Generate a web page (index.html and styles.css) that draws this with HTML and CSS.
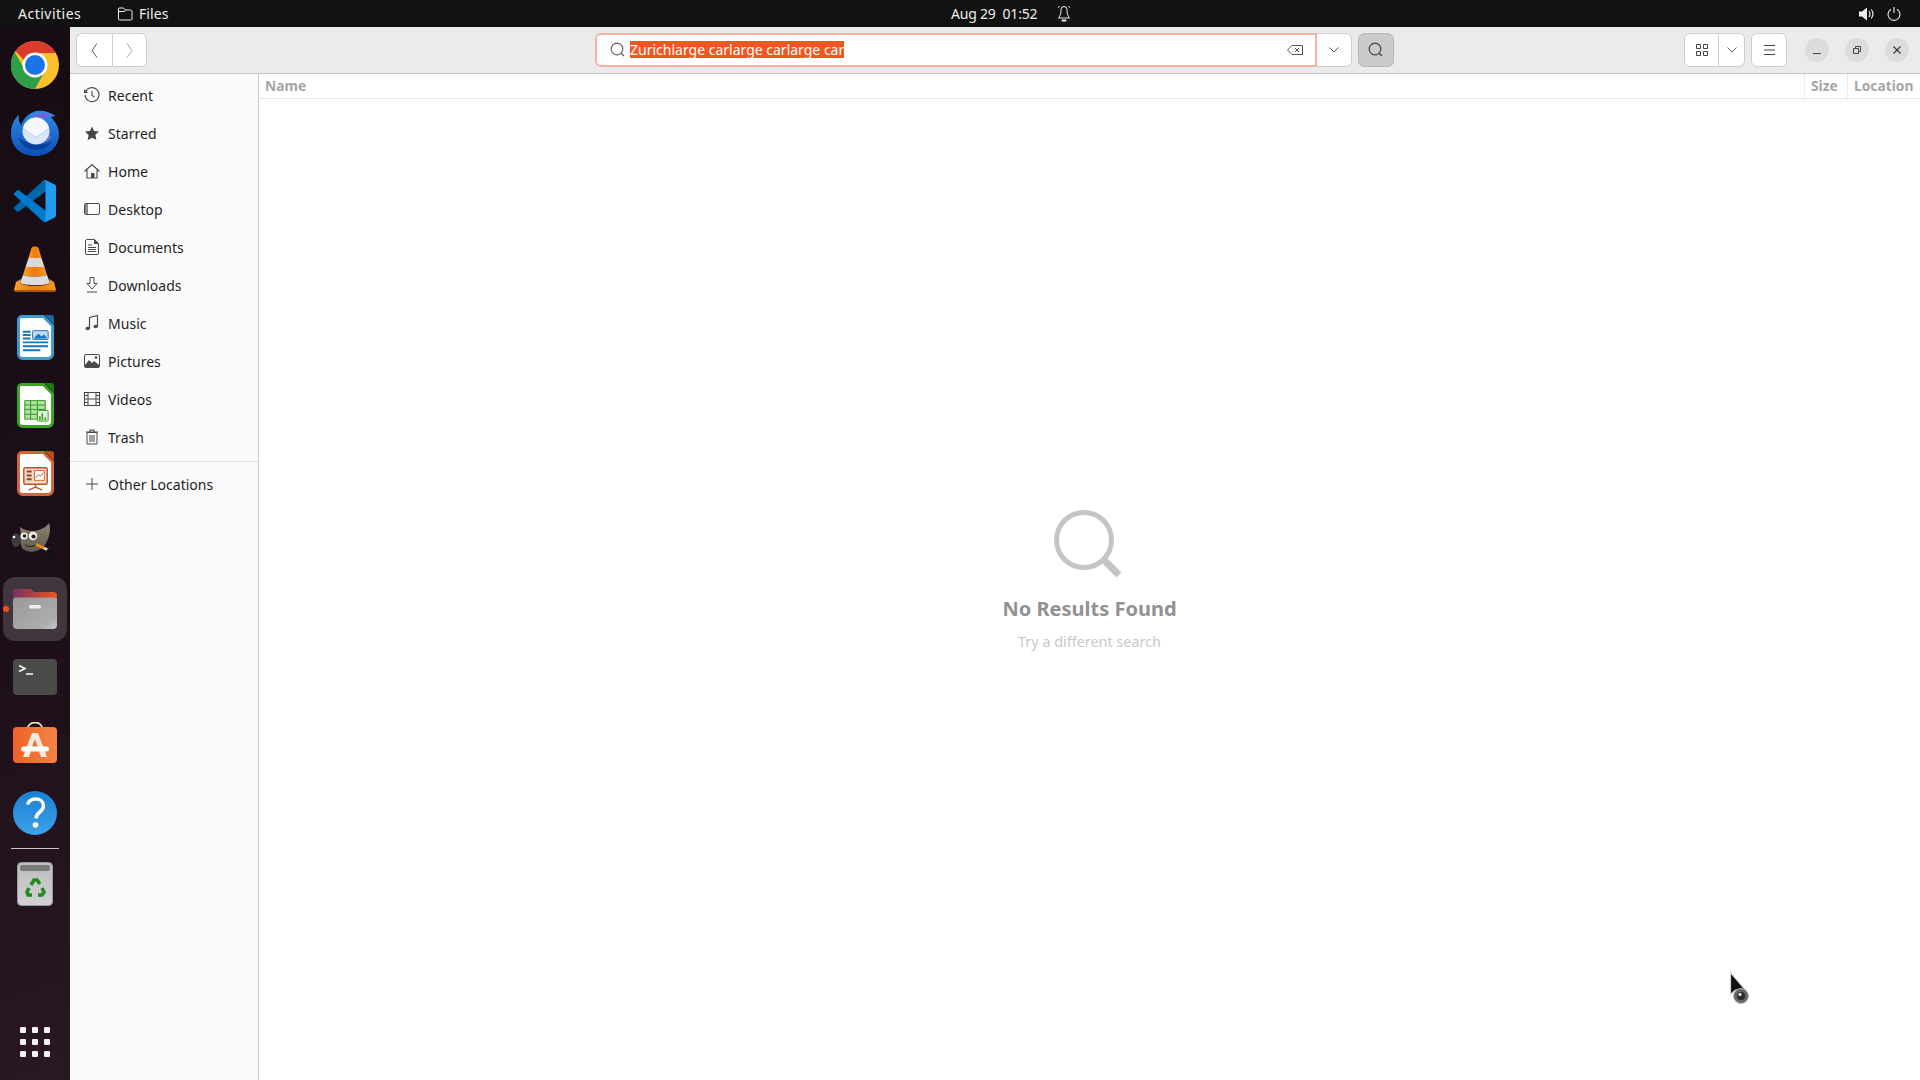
FILE: index.html
```html
<!DOCTYPE html>
<html lang="en">
<head>
<meta charset="utf-8">
<title>Files</title>
<link rel="stylesheet" href="styles.css">
</head>
<body>
<header class="topbar">
  <span class="tb-activities">Activities</span>
  <svg class="tb-folder" width="16" height="14" viewBox="0 0 16 14"><path d="M1.500 12V2a1 1 0 0 1 1-1h4l2 2h5a1.500 1.500 0 0 1 1.500 1.500V12a1.200 1.200 0 0 1-1.200 1H2.700a1.200 1.200 0 0 1-1.200-1zM1.500 4.500h6l1-1.500" fill="none" stroke="#eee" stroke-width="1"/></svg>
  <span class="tb-files">Files</span>
  <span class="tb-clock">Aug 29&nbsp; 01:52</span>
  <svg class="tb-bell" width="14" height="16" viewBox="0 0 14 16"><path d="M4 3.500a3 3 0 0 1 6 0c0 4 .5 6 2.500 8.500h-11C3.500 9.500 4 7.500 4 3.500zM1 1.500 2.500.5M13 1.500 11.500.5" fill="none" stroke="#eee" stroke-width="1"/><rect x="4.500" y="13.500" width="5" height="2" rx="1" fill="#eee"/></svg>
  <svg class="tb-vol" width="15" height="14" viewBox="0 0 15 14"><path d="M0 4.500h3L8 .5v13l-5-4H0z" fill="#eee"/><path d="M10 4c1.200 1.800 1.200 4.200 0 6M12.300 2.500c2 2.800 2 6.200 0 9" fill="none" stroke="#eee" stroke-width="1.200"/></svg>
  <svg class="tb-power" width="14" height="14" viewBox="0 0 14 14"><path d="M4 2.200a6 6 0 1 0 6 0M7 0v6" fill="none" stroke="#eee" stroke-width="1.100"/></svg>
</header>

<div class="desktop">
  <nav class="dock">
    <div class="dock-cell">
      <svg width="48" height="48" viewBox="0 0 48 48"><circle cx="24" cy="24" r="24" fill="#fbc02d"/><path d="M24 0A24 24 0 0 1 45 12H24a12 12 0 0 0-11 7L4.500 10A24 24 0 0 1 24 0z" fill="#db3b2e"/><path d="M3.600 11A24 24 0 0 0 24 48l10-18a12 12 0 0 1-20-1z" fill="#2f9e49"/><circle cx="24" cy="24" r="12.500" fill="#fff"/><circle cx="24" cy="24" r="10" fill="#1a73e8"/></svg>
    </div>
    <div class="dock-cell">
      <svg width="48" height="46" viewBox="0 0 48 46"><defs><linearGradient id="tb" x1="0" y1="0" x2="0" y2="1"><stop offset="0" stop-color="#2f8be8"/><stop offset="1" stop-color="#0d4fb5"/></linearGradient></defs><path d="M8 5c-1 4 0 7 2 10 3-7 9-13 16-14 7-1 12 1 19 5-2 0-4 .5-5 1.500C45 12 48 18 48 24c0 13-10 22-24 22S0 37 0 24C0 15 3 9 8 5z" fill="url(#tb)"/><path d="M20 8c5-6 15-6 22-3-4 0-7 1-8 4-5-1-10-2-14-1z" fill="#6f66dc"/><path d="M7 27c3 9 10 13 18 13 7 0 12-3 16-9-5 3-10 4-17 3-7-1-13-3-17-7z" fill="#0b3f9c"/><path d="M24 34c7 0 12-2 16-6-1-3-3-4-5-5L24 34z" fill="#7f78e0" opacity=".7"/><circle cx="25" cy="21" r="13.500" fill="#d8e8f8"/><path d="M12 18.500 25 27.500 38 18.500A13.500 13.500 0 0 0 25 7.500 13.500 13.500 0 0 0 12 18.500z" fill="#f5f9fd"/><path d="M12 18.500 25 27.500 38 18.500" fill="none" stroke="#b4cfee" stroke-width="1"/></svg>
    </div>
    <div class="dock-cell">
      <svg width="42" height="42" viewBox="0 0 100 100"><path d="M96.4614 10.7962L75.8569 0.875542C73.4719 -0.272773 70.6217 0.211611 68.75 2.08333L1.29858 63.5832C-0.515693 65.2373 -0.513607 68.0937 1.30308 69.7452L6.81272 74.754C8.29793 76.1042 10.5347 76.2036 12.1338 74.9905L93.3609 13.3699C96.086 11.3026 100 13.2462 100 16.6667V16.4275C100 14.0265 98.6246 11.8378 96.4614 10.7962Z" fill="#0065a9"/><path d="M96.4614 89.2038L75.8569 99.1245C73.4719 100.273 70.6217 99.7884 68.75 97.9167L1.29858 36.4169C-0.515693 34.7627 -0.513607 31.9063 1.30308 30.2548L6.81272 25.246C8.29793 23.8958 10.5347 23.7964 12.1338 25.0095L93.3609 86.6301C96.086 88.6974 100 86.7538 100 83.3334V83.5726C100 85.9735 98.6246 88.1622 96.4614 89.2038Z" fill="#007acc"/><path d="M75.8578 99.1263C73.4721 100.274 70.6219 99.7885 68.75 97.9166C71.0564 100.223 75 98.5895 75 95.3278V4.67213C75 1.41039 71.0564 -0.223106 68.75 2.08329C70.6219 0.211402 73.4721 -0.273666 75.8578 0.873633L96.4587 10.7807C98.6234 11.8217 100 14.0112 100 16.4132V83.5871C100 85.9891 98.6234 88.1786 96.4586 89.2196L75.8578 99.1263Z" fill="#1f9cf0"/></svg>
    </div>
    <div class="dock-cell">
      <svg width="42" height="46" viewBox="0 0 42 46"><defs><linearGradient id="vlc" x1="0" x2="1"><stop offset="0" stop-color="#f7a030"/><stop offset=".5" stop-color="#ee7a08"/><stop offset="1" stop-color="#f29a28"/></linearGradient></defs><path d="M17.500 2c1-2 6-2 7 0l3 10H14.500z" fill="url(#vlc)"/><path d="M14.500 12h13l3 9h-19z" fill="#d9d9d9"/><path d="M11.500 21h19l2.500 8c-5 2-19 2-24 0z" fill="url(#vlc)"/><path d="M9 29c5 2 19 2 24 0l3 8c-6 3-24 3-30 0z" fill="#dcdcdc"/><path d="M7 33 2 36 0 44h42l-2-8-5-3 1 4c-6 4-24 4-30 0z" fill="url(#vlc)"/><path d="M0 44h42l-1 2H1z" fill="#a8560a"/></svg>
    </div>
    <div class="dock-cell">
      <svg width="37" height="45" viewBox="0 0 38 46"><path d="M5 1.500h22L36.500 11v29A4.500 4.500 0 0 1 32 44.500H6A4.500 4.500 0 0 1 1.500 40V5A3.500 3.500 0 0 1 5 1.500z" fill="#fff" stroke="#3d9bcb" stroke-width="3"/><path d="M28 0l10 10V3a3 3 0 0 0-3-3z" fill="#1c6a9c"/><path d="M6 17h8M6 20.500h8M6 24h8M6 28h26M6 32h26M6 36h18" stroke="#1a77b3" stroke-width="2"/><rect x="16" y="16" width="16" height="9" rx="1" fill="#bfdcf0" stroke="#1a77b3"/><path d="M17 24l5-5 3 3 3-2 3 4z" fill="#1a77b3"/></svg>
    </div>
    <div class="dock-cell">
      <svg width="37" height="45" viewBox="0 0 38 46"><path d="M5 1.500h22L36.500 11v29A4.500 4.500 0 0 1 32 44.500H6A4.500 4.500 0 0 1 1.500 40V5A3.500 3.500 0 0 1 5 1.500z" fill="#fff" stroke="#3aa520" stroke-width="3"/><path d="M28 0l10 10V3a3 3 0 0 0-3-3z" fill="#1f7a12"/><path d="M8 18h21v19H8z" fill="#b5e0a8" stroke="#2f9a18"/><path d="M8 22.500h21M8 27h21M8 32h21M14 18v19M21 18v19" stroke="#2f9a18" fill="none"/><rect x="21" y="28" width="11" height="11" rx="1" fill="#dff2d8" stroke="#2f9a18"/><path d="M23.500 38v-4M26 38v-7M29 38v-3" stroke="#2f9a18" stroke-width="1.500"/></svg>
    </div>
    <div class="dock-cell">
      <svg width="37" height="45" viewBox="0 0 38 46"><path d="M5 1.500h22L36.500 11v29A4.500 4.500 0 0 1 32 44.500H6A4.500 4.500 0 0 1 1.500 40V5A3.500 3.500 0 0 1 5 1.500z" fill="#fff" stroke="#d2653a" stroke-width="3"/><path d="M28 0l10 10V3a3 3 0 0 0-3-3z" fill="#b84e14"/><rect x="7" y="17" width="24" height="17" rx="1.500" fill="#f3d9c6" stroke="#b7562a" stroke-width="1.500"/><path d="M10 21h5M10 25h5M10 29h5" stroke="#8a4424" stroke-width="2"/><rect x="18" y="20" width="10" height="10" fill="#fff" stroke="#c66a3c"/><path d="M19 28l3-4 2 2 3-4" fill="none" stroke="#c66a3c"/><path d="M19 34v3l-7 3M19 37l7 3" stroke="#b7562a" stroke-width="1.500" fill="none"/></svg>
    </div>
    <div class="dock-cell">
      <svg width="48" height="40" viewBox="0 0 48 40"><defs><linearGradient id="gimp" x1="0" y1="0" x2="0" y2="1"><stop offset="0" stop-color="#8d8572"/><stop offset="1" stop-color="#5f5a4c"/></linearGradient></defs><path d="M9 6C14 10 22 11 28 9 33 7 36 5 38 2 40 8 39 16 34 24 29 31 18 33 12 28 9 25 9 18 10 14z" fill="url(#gimp)"/><ellipse cx="5" cy="19" rx="4.500" ry="7" fill="#3c3c3c"/><circle cx="3" cy="16" r="1.300" fill="#fff"/><circle cx="13" cy="15" r="3.600" fill="#eee"/><circle cx="13.500" cy="15" r="1.800" fill="#222"/><circle cx="22" cy="15" r="4.200" fill="#eee"/><circle cx="22.500" cy="15.500" r="2.100" fill="#222"/><path d="M14 24c3 2 7 2 11 0" fill="none" stroke="#222" stroke-width="1"/><path d="M25 23.500l9 4" stroke="#ee8a1a" stroke-width="3"/><path d="M33 27l5 2.500" stroke="#ccc" stroke-width="3"/><path d="M37 27.500c4 1 8 5 10 12-6-2-10-5-12-9z" fill="#111"/></svg>
    </div>
    <div class="dock-cell">
      <div class="dock-active"></div>
      <div class="dock-dot"></div>
      <svg class="dock-over" width="44" height="40" viewBox="0 0 44 40"><path d="M3 0h15l3 3h19a4 4 0 0 1 4 4v10H0V3a3 3 0 0 1 3-3z" fill="url(#fback)"/><path d="M3 8.500h38a3 3 0 0 1 3 3V36a4 4 0 0 1-4 4H4a4 4 0 0 1-4-4V11.500a3 3 0 0 1 3-3z" fill="url(#ffront)"/><rect x="16" y="16" width="12" height="3.500" rx="1.500" fill="#eee"/><defs><linearGradient id="fback" x1="0" x2="1"><stop offset="0" stop-color="#7e2f67"/><stop offset="1" stop-color="#e8561f"/></linearGradient><linearGradient id="ffront" x1="0" y1="0" x2="1" y2="1"><stop offset="0" stop-color="#999"/><stop offset=".8" stop-color="#adadad"/><stop offset="1" stop-color="#c8c8c8"/></linearGradient></defs></svg>
    </div>
    <div class="dock-cell">
      <svg width="44" height="36" viewBox="0 0 44 36"><rect width="44" height="36" rx="4" fill="#4a4a48"/><path d="M6 6.500l6 3-6 3" fill="none" stroke="#fff" stroke-width="1.500"/><path d="M13 15h7" stroke="#fff" stroke-width="1.500"/></svg>
    </div>
    <div class="dock-cell">
      <svg class="nudge-up" width="44" height="42" viewBox="0 0 44 42"><defs><linearGradient id="shop" x1="0" x2="1"><stop offset="0" stop-color="#f0622a"/><stop offset="1" stop-color="#f38343"/></linearGradient></defs><path d="M15 6a7 5.500 0 0 1 14 0" fill="none" stroke="#f3d9b8" stroke-width="1.800"/><rect y="5" width="44" height="36" rx="4" fill="url(#shop)"/><path fill-rule="evenodd" d="M19 11h6l9 24h-6l-2-6h-8l-2 6h-6zM22 17l-3 8h6z" fill="#fbe8de"/><rect x="8" y="24.500" width="28" height="5" rx="2.500" fill="#fff"/></svg>
    </div>
    <div class="dock-cell">
      <svg width="44" height="44" viewBox="0 0 44 44"><circle cx="22" cy="22" r="22" fill="url(#help)"/><path d="M14.500 13.500C16 9.500 19 8 22.500 8c4.500 0 8 2.700 8 6.800 0 3-1.800 4.700-4 6.500-2 1.600-3.300 3-3.500 6" fill="none" stroke="#fff" stroke-width="3.500"/><circle cx="22.500" cy="34" r="2.800" fill="#fff"/><defs><linearGradient id="help" x1="0" y1="0" x2="0" y2="1"><stop offset="0" stop-color="#1b7fd3"/><stop offset="1" stop-color="#3da2ea"/></linearGradient></defs></svg>
    </div>
    <div class="dock-sep"></div>
    <div class="dock-trash">
      <svg width="36" height="44" viewBox="0 0 36 44"><defs><linearGradient id="bin" x1="0" y1="0" x2="0" y2="1"><stop offset="0" stop-color="#bcbcbc"/><stop offset="1" stop-color="#d2d2d2"/></linearGradient></defs><rect x=".5" y=".5" width="35" height="43" rx="4" fill="url(#bin)" stroke="#9a9a9a"/><rect x="3" y="3" width="30" height="6" rx="2" fill="#7a7a7a"/><g fill="none" stroke="#218a21" stroke-width="3.500"><path d="M14 23l3-5h3l3 4"/><path d="M25 26l2 4-2 3h-4"/><path d="M15 33h-4l-1-3 2-4"/></g></svg>
    </div>
    <div class="dock-grid">
      <i></i><i></i><i></i><i></i><i></i><i></i><i></i><i></i><i></i>
    </div>
  </nav>

  <div class="window">
    <div class="toolbar">
      <div class="btn-group nav-group">
        <button class="tbtn nav-btn"><svg width="7" height="15" viewBox="0 0 7 15"><path d="M6 .5 1 7.500l5 7" fill="none" stroke="#555" stroke-width="1"/></svg></button>
        <button class="tbtn nav-btn"><svg width="7" height="15" viewBox="0 0 7 15"><path d="M1 .5 6 7.500l-5 7" fill="none" stroke="#a5a5a5" stroke-width="1"/></svg></button>
      </div>
      <div class="search-group">
        <div class="search-entry">
          <svg class="search-lead" width="16" height="16" viewBox="0 0 16 16"><circle cx="7" cy="7" r="5.800" fill="none" stroke="#666" stroke-width="1.200"/><path d="M11.200 11.200 14 14" stroke="#666" stroke-width="1.500"/></svg>
          <span class="search-text">Zurichlarge carlarge carlarge car</span>
          <svg class="search-clear" width="16" height="10" viewBox="0 0 16 10"><path d="M5 .5h10.500v9H5L.5 5z" fill="none" stroke="#555"/><path d="M8 3l4 4M12 3 8 7" stroke="#555"/></svg>
        </div>
        <button class="search-drop"><svg width="10" height="6" viewBox="0 0 10 6"><path d="M.5.500 5 5 9.500.5" fill="none" stroke="#555" stroke-width="1"/></svg></button>
      </div>
      <button class="search-toggle"><svg width="16" height="16" viewBox="0 0 16 16"><circle cx="7" cy="7" r="5.800" fill="none" stroke="#444" stroke-width="1.200"/><path d="M11.200 11.200 14 14" stroke="#444" stroke-width="1.500"/></svg></button>
      <div class="btn-group view-group">
        <button class="tbtn view-btn"><svg width="12" height="12" viewBox="0 0 12 12"><path d="M.5.500h4v4h-4zM7.500.500h4v4h-4zM.5 7.500h4v4h-4zM7.500 7.500h4v4h-4z" fill="none" stroke="#444"/></svg></button>
        <button class="tbtn view-drop"><svg width="10" height="6" viewBox="0 0 10 6"><path d="M.5.500 5 5 9.500.5" fill="none" stroke="#666" stroke-width="1"/></svg></button>
      </div>
      <button class="tbtn menu-btn"><svg width="11" height="10" viewBox="0 0 11 10"><path d="M0 .5h11M0 5h11M0 9.500h11" stroke="#444"/></svg></button>
      <div class="wm-buttons">
        <span class="wm"><svg width="8" height="8" viewBox="0 0 8 8"><path d="M0 7.500h8" stroke="#444"/></svg></span>
        <span class="wm"><svg width="8" height="8" viewBox="0 0 8 8"><path d="M.5 2.500h5v5h-5zM2.500 2V.5h5v5H6" fill="none" stroke="#444"/></svg></span>
        <span class="wm"><svg width="8" height="8" viewBox="0 0 8 8"><path d="M.5.500l7 7M7.500.5l-7 7" stroke="#333" stroke-width="1.100"/></svg></span>
      </div>
    </div>

    <div class="content">
      <aside class="sidebar">
        <div class="side-row"><svg width="16" height="16" viewBox="0 0 16 16"><path d="M1.500 5A7 7 0 1 1 1 8" fill="none" stroke="#4a4a4a" stroke-width="1.100"/><path d="M0 2v4h4z" fill="#4a4a4a"/><path d="M8 4v4.500l2.500 1.500" fill="none" stroke="#4a4a4a" stroke-width="1.100"/></svg><span>Recent</span></div>
        <div class="side-row"><svg width="16" height="16" viewBox="0 0 16 16"><path d="M8 1.500l2 4.500 5 .5-3.700 3.300 1.100 5L8 12.700 3.600 15.300l1.100-5L1 6.500 6 6z" fill="#444"/></svg><span>Starred</span></div>
        <div class="side-row"><svg width="16" height="16" viewBox="0 0 16 16"><path d="M.5 8.500 8 1.500l7.500 7M3 7v8h10V7" fill="none" stroke="#4a4a4a" stroke-width="1.100"/><rect x="7" y="10" width="3.500" height="5" fill="#4a4a4a"/></svg><span>Home</span></div>
        <div class="side-row"><svg width="16" height="14" viewBox="0 0 16 14"><rect x=".5" y="1.500" width="15" height="11" rx="1.500" fill="#fafafa" stroke="#4a4a4a"/><rect x="1" y="2" width="3" height="10" fill="#8a8a8a"/></svg><span>Desktop</span></div>
        <div class="side-row"><svg width="14" height="16" viewBox="0 0 14 16"><path d="M1.500.5h8l4 4V14a1.500 1.500 0 0 1-1.500 1.500H2A1.500 1.500 0 0 1 .5 14V2A1.500 1.500 0 0 1 1.500.5z" fill="none" stroke="#4a4a4a"/><path d="M9 .5l5 4.500H9z" fill="#4a4a4a"/><path d="M3 6h4M3 8.500h8M3 10.500h8M3 12.500h8" stroke="#4a4a4a"/></svg><span>Documents</span></div>
        <div class="side-row"><svg width="14" height="16" viewBox="0 0 14 16"><path d="M5 .5h4v6h3L7 12 2 6.500h3z" fill="none" stroke="#4a4a4a"/><path d="M2 15h10" stroke="#4a4a4a"/></svg><span>Downloads</span></div>
        <div class="side-row"><svg width="14" height="16" viewBox="0 0 14 16"><path d="M4.500 13V2.500l8-2V11" fill="none" stroke="#4a4a4a" stroke-width="1.200"/><ellipse cx="2.700" cy="13.500" rx="2.200" ry="1.800" fill="#4a4a4a"/><ellipse cx="10.700" cy="11.500" rx="2.200" ry="1.800" fill="#4a4a4a"/></svg><span>Music</span></div>
        <div class="side-row"><svg width="16" height="14" viewBox="0 0 16 14"><rect x=".5" y=".5" width="15" height="13" rx="1.500" fill="none" stroke="#4a4a4a"/><path d="M1 11l4-5 3 3 2-2 5 4v2.500H1z" fill="#4a4a4a"/><circle cx="12" cy="3.500" r="1.300" fill="#4a4a4a"/></svg><span>Pictures</span></div>
        <div class="side-row"><svg width="16" height="14" viewBox="0 0 16 14"><rect x=".5" y=".5" width="15" height="13" fill="none" stroke="#4a4a4a"/><path d="M4 .5v13M12 .5v13M0 3.500h4M0 7h4M0 10.500h4M12 3.500h4M12 7h4M12 10.500h4M4 7h8" stroke="#4a4a4a" fill="none"/></svg><span>Videos</span></div>
        <div class="side-row"><svg width="14" height="16" viewBox="0 0 14 16"><path d="M1 3h12M5 3V1h4v2" fill="none" stroke="#4a4a4a" stroke-width="1.200"/><path d="M2 3.500h10V15H2z" fill="none" stroke="#4a4a4a"/><path d="M5 6v7M7 6v7M9 6v7" stroke="#4a4a4a"/></svg><span>Trash</span></div>
        <div class="side-sep"></div>
        <div class="side-row"><svg width="12" height="12" viewBox="0 0 12 12"><path d="M6 0v12M0 6h12" stroke="#4a4a4a"/></svg><span>Other Locations</span></div>
      </aside>
      <main class="main">
        <div class="col-head">
          <div class="col col-name">Name</div>
          <div class="col col-size">Size</div>
          <div class="col col-loc">Location</div>
        </div>
        <div class="empty">
          <svg class="empty-icon" width="70" height="70" viewBox="0 0 70 70"><circle cx="31" cy="31" r="27.500" fill="none" stroke="#c4c4c4" stroke-width="5"/><path d="M50 50l16 16" stroke="#c4c4c4" stroke-width="7"/></svg>
          <div class="empty-title">No Results Found</div>
          <div class="empty-sub">Try a different search</div>
        </div>
      </main>
    </div>
  </div>
</div>

<svg class="cursor" width="22" height="34" viewBox="0 0 22 34"><path d="M1.500 1.500v22l5-4.500h10z" fill="#111" stroke="#d8d8d8" stroke-width="1.200"/><circle cx="12" cy="25" r="7.500" fill="#666" stroke="#bbb" stroke-width="1"/><circle cx="12" cy="25" r="4" fill="#2a2a2a"/><circle cx="11" cy="23.500" r="1.700" fill="#ddd"/></svg>
</body>
</html>
```

FILE: styles.css
```css
* { box-sizing: border-box; }
html, body {
  margin: 0;
  width: 1920px;
  height: 1080px;
  overflow: hidden;
  font-family: "Noto Sans", "Liberation Sans", sans-serif;
}
body { display: flex; flex-direction: column; position: relative; }
svg { display: block; flex: none; }
button { margin: 0; padding: 0; font: inherit; }

/* top bar */
.topbar {
  height: 27px;
  flex: none;
  background: #121212;
  color: #eeeeee;
  display: flex;
  align-items: center;
  font-size: 14px;
}
.tb-activities { margin-left: 18px; width: 62px; letter-spacing: .5px; white-space: nowrap; }
.tb-folder { margin-left: 37px; }
.tb-files { margin-left: 6px; width: 32px; letter-spacing: .1px; }
.tb-clock { margin-left: 780px; width: 88px; white-space: nowrap; letter-spacing: -.2px; }
.tb-bell { margin-left: 18px; }
.tb-vol { margin-left: 788px; }
.tb-power { margin-left: 13px; }

.desktop { flex: 1; display: flex; min-height: 0; }

/* dock */
.dock {
  width: 70px;
  flex: none;
  padding-top: 4px;
  background: linear-gradient(160deg, #170c14 0%, #1c0f19 55%, #2a1822 100%);
  display: flex;
  flex-direction: column;
  align-items: center;
}
.dock-cell {
  width: 70px;
  height: 68px;
  flex: none;
  display: flex;
  align-items: center;
  justify-content: center;
  position: relative;
}
.nudge-up { margin-bottom: 4px; }
.dock-active {
  position: absolute;
  left: 3px;
  top: 2px;
  width: 64px;
  height: 64px;
  border-radius: 12px;
  background: #41353e;
}
.dock-dot {
  position: absolute;
  left: 3px;
  top: 31px;
  width: 6px;
  height: 6px;
  border-radius: 50%;
  background: #e95420;
}
.dock-over { position: relative; }
.dock-sep {
  width: 48px;
  height: 1px;
  flex: none;
  margin-top: 1px;
  background: #c9c5c8;
}
.dock-trash { margin-top: 13px; }
.dock-grid {
  margin-top: auto;
  margin-bottom: 23px;
  display: grid;
  grid-template-columns: repeat(3, 6px);
  grid-auto-rows: 6px;
  gap: 6px;
}
.dock-grid i { background: #f2f2f2; border-radius: 1px; display: block; }

/* window */
.window { flex: 1; display: flex; flex-direction: column; min-width: 0; }
.toolbar {
  height: 47px;
  flex: none;
  background: #ebebeb;
  border-bottom: 1px solid #c5c5c5;
  display: flex;
  align-items: center;
  padding-left: 6px;
}
.btn-group { display: flex; }
.tbtn {
  height: 34px;
  background: #fff;
  border: 1px solid #cdcdcd;
  display: flex;
  align-items: center;
  justify-content: center;
}
.nav-btn { width: 35px; }
.nav-btn:first-child { width: 36px; border-radius: 6px 0 0 6px; border-right: 0; padding-right: 1px; }
.nav-btn:last-child { border-radius: 0 6px 6px 0; }
.search-group { display: flex; margin-left: 448px; }
.search-entry {
  width: 722px;
  height: 34px;
  background: #fff;
  border: 2px solid #f4b2a0;
  border-radius: 6px 0 0 6px;
  display: flex;
  align-items: center;
  padding-left: 13px;
  padding-right: 12px;
}
.search-text {
  margin-left: 4px;
  margin-bottom: 2px;
  background: #ee5622;
  color: #fff;
  font-size: 14px;
  line-height: 17px;
  white-space: nowrap;
}
.search-clear { margin-left: auto; }
.search-drop {
  width: 35px;
  height: 34px;
  background: #fff;
  border: 1px solid #cdcdcd;
  border-left: 0;
  border-radius: 0 6px 6px 0;
  display: flex;
  align-items: center;
  justify-content: center;
}
.search-toggle {
  width: 36px;
  height: 34px;
  margin-left: 6px;
  background: #cbcbcb;
  border: 1px solid #b9b9b9;
  border-radius: 6px;
  display: flex;
  align-items: center;
  justify-content: center;
}
.view-group { margin-left: 290px; }
.view-btn { width: 35px; border-radius: 6px 0 0 6px; }
.view-drop { width: 26px; border-left: 0; border-radius: 0 6px 6px 0; }
.menu-btn { width: 36px; margin-left: 6px; border-radius: 6px; }
.wm-buttons { display: flex; margin-left: 18px; gap: 16px; }
.wm {
  width: 24px;
  height: 24px;
  border-radius: 50%;
  background: #dcdcdc;
  display: flex;
  align-items: center;
  justify-content: center;
}

.content { flex: 1; display: flex; min-height: 0; }

/* sidebar */
.sidebar {
  width: 189px;
  flex: none;
  padding-top: 2px;
  background: #fafafa;
  border-right: 1px solid #cfcfcf;
}
.side-row {
  height: 38px;
  display: grid;
  grid-template-columns: 16px 1fr;
  column-gap: 8px;
  align-items: center;
  justify-items: center;
  padding-left: 14px;
  font-size: 14px;
  letter-spacing: .03px;
  color: #1f1f1f;
}
.side-row span { justify-self: start; }
.side-sep { height: 1px; margin: 5px 0 3px; background: #dedede; }

/* main */
.main { flex: 1; display: flex; flex-direction: column; background: #fff; min-width: 0; }
.col-head {
  height: 25px;
  flex: none;
  display: flex;
  border-bottom: 1px solid #e6e6e6;
  font-size: 13.800px;
  font-weight: 700;
  color: #a6a6a6;
}
.col { padding-left: 6px; line-height: 24px; white-space: nowrap; }
.col-name { flex: 1; }
.col-size { width: 43px; border-left: 1px solid #ececec; }
.col-loc { width: 73px; border-left: 1px solid #ececec; }

.empty {
  flex: 1;
  display: flex;
  flex-direction: column;
  align-items: center;
  padding-top: 410px;
}
.empty-icon { margin-right: 3px; }
.empty-title { margin-top: 16px; font-size: 20px; font-weight: 700; line-height: 28px; color: #929292; }
.empty-sub { margin-top: 9px; font-size: 14.400px; line-height: 20px; color: #c8c8c8; }

.cursor { position: absolute; left: 1729px; top: 971px; }
```
